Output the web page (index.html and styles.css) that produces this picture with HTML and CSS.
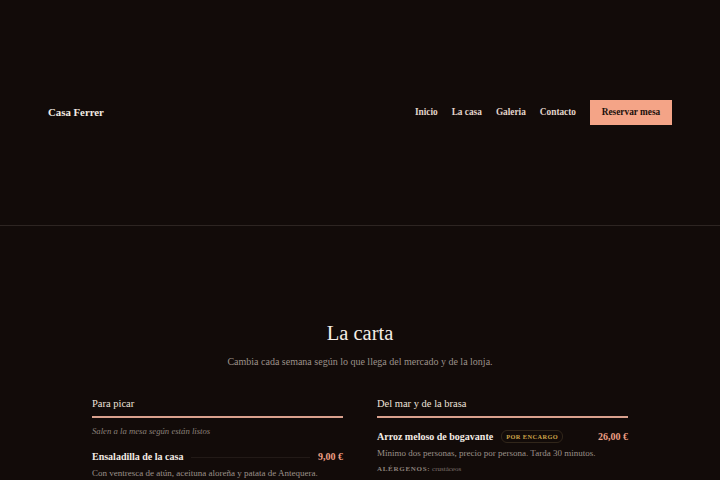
FILE: index.html
```html
<!DOCTYPE html>
<html lang="es">
<head>
<meta charset="utf-8">
<title>Casa Ferrer</title>
<link rel="stylesheet" href="styles.css">
</head>
<body>
<header class="site-header">
  <div class="brand">Casa Ferrer</div>
  <nav class="nav">
    <a href="#">Inicio</a>
    <a href="#">La casa</a>
    <a href="#">Galeria</a>
    <a href="#">Contacto</a>
    <a href="#" class="cta">Reservar mesa</a>
  </nav>
</header>
<main class="menu">
  <h1 class="menu-title">La carta</h1>
  <p class="menu-sub">Cambia cada semana según lo que llega del mercado y de la lonja.</p>
  <div class="columns">
    <section class="cat">
      <h2 class="cat-title">Para picar</h2>
      <p class="cat-note">Salen a la mesa según están listos</p>
      <div class="item">
        <div class="item-row">
          <span class="item-name">Ensaladilla de la casa</span>
          <span class="leader"></span>
          <span class="price">9,00 €</span>
        </div>
        <p class="item-desc">Con ventresca de atún, aceituna aloreña y patata de Antequera.</p>
      </div>
    </section>
    <section class="cat">
      <h2 class="cat-title">Del mar y de la brasa</h2>
      <div class="item first">
        <div class="item-row">
          <span class="item-name">Arroz meloso de bogavante</span>
          <span class="badge">POR ENCARGO</span>
          <span class="spacer"></span>
          <span class="price">26,00 €</span>
        </div>
        <p class="item-desc">Mínimo dos personas, precio por persona. Tarda 30 minutos.</p>
        <p class="allergens"><span class="al-label">ALÉRGENOS:</span> crustáceos</p>
      </div>
    </section>
  </div>
</main>
</body>
</html>
```
FILE: styles.css
```css
html, body {
  margin: 0;
  padding: 0;
  background: #120b09;
  color: #f1e7de;
  font-family: "Liberation Serif", "Times New Roman", serif;
}
.site-header {
  height: 226px;
  box-sizing: border-box;
  border-bottom: 1px solid #2d2522;
  display: flex;
  align-items: center;
  justify-content: space-between;
  padding: 0 48px 1px 48px;
}
.brand {
  font-weight: bold;
  font-size: 10.8px;
  color: #f4ece4;
}
.nav {
  display: flex;
  align-items: center;
  gap: 14px;
}
.nav a {
  color: #e2d5cb;
  text-decoration: none;
  font-weight: bold;
  font-size: 9.3px;
}
.nav a.cta {
  background: #f4a487;
  color: #1a100c;
  width: 82px;
  text-align: center;
  height: 25px;
  line-height: 25px;
  display: inline-block;
  font-size: 9.3px;
}
.menu {
  width: 536px;
  margin: 0 auto;
  padding-top: 95px;
}
.menu-title {
  margin: 0;
  text-align: center;
  font-weight: normal;
  font-size: 20.5px;
  line-height: 24px;
  color: #f5ede6;
}
.menu-sub {
  margin: 10px 0 0;
  text-align: center;
  font-size: 10px;
  line-height: 14px;
  color: #9c918a;
}
.columns {
  display: grid;
  grid-template-columns: 1fr 1fr;
  gap: 34px;
  margin-top: 28px;
}
.cat-title {
  margin: 0;
  font-weight: normal;
  font-size: 10.5px;
  line-height: 14px;
  padding-bottom: 5px;
  border-bottom: 2px solid #d9a08d;
  color: #eee3da;
}
.cat-note {
  margin: 7px 0 0;
  font-style: italic;
  font-size: 8.7px;
  line-height: 12px;
  color: #8c817a;
}
.item {
  margin-top: 12px;
}
.item.first {
  margin-top: 11px;
}
.item-row {
  display: flex;
  align-items: center;
  gap: 8px;
  height: 14px;
}
.item-name {
  font-weight: bold;
  font-size: 10px;
  color: #f4ece5;
  white-space: nowrap;
}
.leader {
  flex: 1;
  height: 1px;
  background: #221a17;
  margin: 2px 0 0;
}
.spacer {
  flex: 1;
}
.price {
  font-weight: bold;
  font-size: 10px;
  color: #ee9f84;
  white-space: nowrap;
}
.badge {
  font-size: 6.3px;
  font-weight: bold;
  letter-spacing: 0.45px;
  line-height: 9px;
  color: #cfa64a;
  border: 1px solid #31261a;
  border-radius: 6px;
  padding: 1px 4px;
  white-space: nowrap;
}
.item-desc {
  margin: 3.5px 0 0;
  font-size: 9px;
  line-height: 13px;
  color: #9c918a;
}
.allergens {
  margin: 4px 0 0;
  font-size: 7px;
  line-height: 11px;
  color: #7d726c;
}
.al-label {
  font-weight: bold;
  letter-spacing: 0.7px;
  color: #8d827b;
}
```
